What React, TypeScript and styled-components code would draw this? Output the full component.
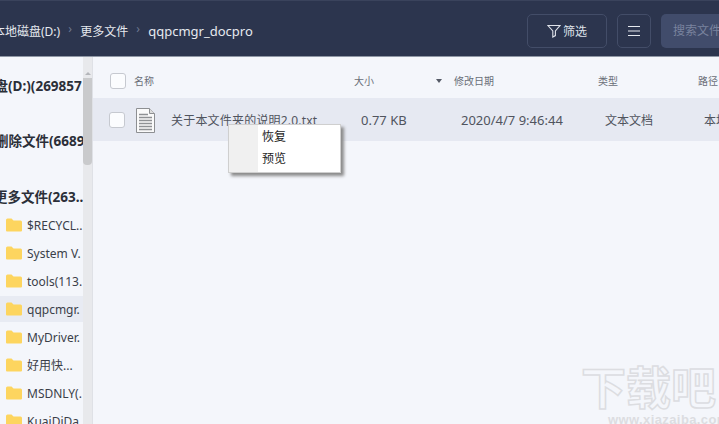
import React from "react";
import styled, { createGlobalStyle } from "styled-components";

const Global = createGlobalStyle`
  html, body { margin: 0; padding: 0; width: 719px; height: 424px; overflow: hidden; background: #f4f6fb; }
  * { box-sizing: border-box; }
  body { font-family: "Noto Sans", "Noto Sans CJK SC", sans-serif; }
`;
const Page = styled.div`
  position: relative; width: 719px; height: 424px; overflow: hidden;
  display: flex; flex-direction: column; background: #f4f6fb;
`;
const Header = styled.header`
  height: 57px; flex: none; display: flex; align-items: center; padding-top: 8px; padding-bottom: 4px;
  background: #2c354e; border-top: 1px solid #3a435c; border-bottom: 1px solid #8f97a5;
`;
const Crumbs = styled.nav`
  flex: 1; display: flex; align-items: center; margin-left: -7px; color: #e6e9ef;
`;
const Crumb = styled.span<{ $size: number }>`white-space: nowrap; font-size: ${p => p.$size}px;`;
const Chevron = styled.span`
  width: 20px; display: flex; justify-content: center; color: #6e7890; font-size: 12px; margin-top: -5px;
`;
const ToolButton = styled.button<{ $w: number }>`
  width: ${p => p.$w}px; height: 34px; margin-right: 10px; padding: 0; display: flex; align-items: center; justify-content: center; gap: 2px;
  background: transparent; border: 1px solid #434d68; border-radius: 5px; color: #dfe3ea;
  font: 12px "Noto Sans CJK SC", sans-serif;
`;
const Search = styled.div`
  width: 58px; height: 34px; background: #414c6b; border-radius: 5px 0 0 5px; color: #79839e;
  font-size: 12px; padding-left: 12px; line-height: 33px; white-space: nowrap; overflow: hidden;
`;
const Body = styled.div`flex: 1; display: flex; min-height: 0;`;
const Sidebar = styled.aside`
  width: 93px; flex: none; display: flex; border-right: 1px solid #dfe1e6; overflow: hidden;
`;
const Tree = styled.div`
  width: 83px; flex: none; display: flex; flex-direction: column; padding-top: 15px; overflow: hidden;
`;
const Drive = styled.div<{ $mb: number; $shift: number }>`
  height: 28px; flex: none; line-height: 28px; margin-bottom: ${p => p.$mb}px; margin-left: ${p => p.$shift}px;
  white-space: nowrap; font-size: 13.5px; font-weight: 700; color: #2b2f38;
`;
const Folder = styled.div<{ $active?: boolean }>`
  height: 26px; flex: none; margin-bottom: 2px; display: flex; align-items: center; gap: 5px; padding-left: 6px; white-space: nowrap; overflow: hidden;
  font-size: 12px; color: #3b3f49; background: ${p => (p.$active ? "#e8ebf3" : "transparent")};
`;
const Scroll = styled.div`
  width: 9px; flex: none; background: #e8e9ec; display: flex; flex-direction: column; align-items: center; padding-top: 15px;
`;
const ScrollArrow = styled.div`
  width: 0; height: 0; border: 3px solid transparent; border-top: 0; border-bottom: 3px solid #b4b6ba; margin-bottom: 3px;
`;
const Thumb = styled.div`width: 9px; height: 87px; background: #c9cacc; border-radius: 0 0 4px 4px;`;
const Main = styled.main`flex: 1; min-width: 0; overflow: hidden;`;
const HeadRow = styled.div`
  height: 41px; display: grid; grid-template-columns: 16px 8px 219px 101px 144px 100px 60px; align-items: center; padding: 6px 0 0 17px;
  font-size: 10px; color: #6a6e78; white-space: nowrap;
`;
const Check = styled.span`
  width: 16px; height: 16px; background: #fbfcfe; border: 1px solid #c6c9d0; border-radius: 3px; display: block;
`;
const NameHead = styled.span`padding-right: 0;`;
const SortCell = styled.span`display: flex; justify-content: space-between; align-items: center; padding: 0 12px 0 1px;`;
const SortArrow = styled.span`
  width: 0; height: 0; border: 3.5px solid transparent; border-bottom: 0; border-top: 4px solid #555a66;
`;
const FileRow = styled.div`
  height: 43px; display: grid; grid-template-columns: 16px 11px 35px 190px 100px 144px 99px 40px; align-items: center; padding: 1px 0 0 16px;
  background: #e6e9f2; font-size: 12px; color: #50545e; white-space: nowrap;
`;
const FileName = styled.span`letter-spacing: .2px;`;
const Num = styled.span`font-size: 13px;`;
const Menu = styled.div`
  position: absolute; left: 228px; top: 124px; width: 113px; height: 49px; background: #fff;
  border: 1px solid #cfcfcf; box-shadow: 3px 3px 3px #8b8b8b; display: flex;
`;
const MenuGutter = styled.div`width: 29px; flex: none; background: #f0f0f0;`;
const MenuList = styled.div`flex: 1; padding: 1px 0 0 4px; display: flex; flex-direction: column;`;
const MenuItem = styled.div`height: 22px; line-height: 22px; font-size: 12px; color: #1d1d1d;`;
const Watermark = styled.div`
  position: absolute; left: 581px; top: 364px; color: transparent; -webkit-text-stroke: 1.5px #dcdde1;
  font: 700 45px/44px "Noto Sans CJK SC", sans-serif; white-space: nowrap;
`;
const WaterUrl = styled.div`
  position: absolute; left: 608px; top: 413px; color: #dcdde1; font: 700 13px/14px "Liberation Sans", sans-serif; letter-spacing: .4px;
`;

const FolderIcon = () => (
  <svg width="16" height="14" viewBox="0 0 16 14" style={{ flex: "none" }}>
    <path d="M0 2a1.5 1.5 0 0 1 1.5-1.5h4L7.5 2.5H14.5A1.5 1.5 0 0 1 16 4v8.5a1 1 0 0 1-1 1H1a1 1 0 0 1-1-1z" fill="#fdd55f" />
  </svg>
);
const DocIcon = () => (
  <svg width="19" height="25" viewBox="0 0 19 25">
    <path d="M.5.5h13l5 5v19H.5z" fill="#fafafa" stroke="#8d8f92" />
    <path d="M13.5.5v5h5" fill="#ddd" stroke="#8d8f92" />
    <path d="M3 6.5h9M3 9.5h13M3 12.5h13M3 15.5h13M3 18.5h13M3 21.5h13" stroke="#8f9194" strokeWidth="1.3" />
  </svg>
);
const FilterIcon = () => (
  <svg width="14" height="14" viewBox="0 0 14 14" fill="none" stroke="#dfe3ea" strokeWidth="1.1">
    <path d="M1 1.5h12L8.4 7v4.6L5.8 13V7z" />
  </svg>
);
const MenuIcon = () => (
  <svg width="12" height="10" viewBox="0 0 12 10" stroke="#e6e9ef" strokeWidth="1.1">
    <path d="M0 .5h12M0 5h12M0 9.5h12" />
  </svg>
);
const folders = ["$RECYCL..", "System V.", "tools(113.", "qqpcmgr.", "MyDriver.", "好用快...", "MSDNLY(.", "KuaiDiDa"];

export default function App() {
  return (
    <Page>
      <Global />
      <Header>
        <Crumbs>
          <Crumb $size={12}>本地磁盘(D:)</Crumb><Chevron>›</Chevron>
          <Crumb $size={12}>更多文件</Crumb><Chevron>›</Chevron>
          <Crumb $size={13}>qqpcmgr_docpro</Crumb>
        </Crumbs>
        <ToolButton $w={80}><FilterIcon />筛选</ToolButton>
        <ToolButton $w={34}><MenuIcon /></ToolButton>
        <Search>搜索文件</Search>
      </Header>
      <Body>
        <Sidebar>
          <Tree>
            <Drive $mb={27} $shift={-46}>本地磁盘(D:)(269857</Drive>
            <Drive $mb={28} $shift={-5}>删除文件(6689</Drive>
            <Drive $mb={1} $shift={-6}>更多文件(263..</Drive>
            {folders.map((f, i) => (
              <Folder key={f} $active={i === 3}><FolderIcon />{f}</Folder>
            ))}
          </Tree>
          <Scroll><ScrollArrow /><Thumb /></Scroll>
        </Sidebar>
        <Main>
          <HeadRow>
            <Check /><span /><NameHead>名称</NameHead>
            <SortCell>大小<SortArrow /></SortCell>
            <span>修改日期</span><span>类型</span><span>路径</span>
          </HeadRow>
          <FileRow>
            <Check /><span /><DocIcon />
            <FileName>关于本文件夹的说明2.0.txt</FileName>
            <Num>0.77 KB</Num>
            <Num>2020/4/7 9:46:44</Num>
            <span>文本文档</span><span>本地</span>
          </FileRow>
        </Main>
      </Body>
      <Menu>
        <MenuGutter />
        <MenuList><MenuItem>恢复</MenuItem><MenuItem>预览</MenuItem></MenuList>
      </Menu>
      <Watermark>下载吧</Watermark>
      <WaterUrl>www.xiazaiba.com</WaterUrl>
    </Page>
  );
}
